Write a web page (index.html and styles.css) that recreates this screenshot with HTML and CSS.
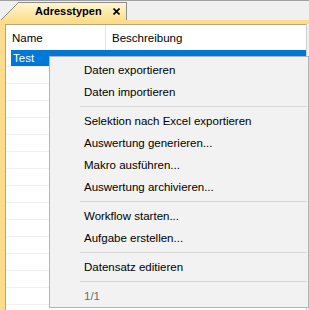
FILE: index.html
```html
<!DOCTYPE html>
<html>
<head>
<meta charset="utf-8">
<link rel="stylesheet" href="styles.css">
</head>
<body>
<div class="window">
  <div class="tabstrip">
    <div class="tab">
      <span class="tab-title">Adresstypen</span>
      <svg class="tab-close" width="7" height="7" viewBox="0 0 7 7"><path d="M0.5 0.5 L6.5 6.5 M6.5 0.5 L0.5 6.5" stroke="#000" stroke-width="1.6" fill="none"/></svg>
    </div>
  </div>
  <div class="frame">
    <div class="pane">
      <div class="grid-head">
        <div class="hcell c1">Name</div>
        <div class="hcell c2">Beschreibung</div>
      </div>
      <div class="row selected"><div class="sel">Test</div></div>
      <div class="row"></div><div class="row"></div><div class="row"></div><div class="row"></div>
      <div class="row"></div><div class="row"></div><div class="row"></div><div class="row"></div>
      <div class="row"></div><div class="row"></div><div class="row"></div><div class="row"></div>
      <div class="row"></div><div class="row"></div><div class="row"></div>
    </div>
  </div>
  <div class="menu">
    <div class="item">Daten exportieren</div>
    <div class="item">Daten importieren</div>
    <div class="sep"></div>
    <div class="item">Selektion nach Excel exportieren</div>
    <div class="item">Auswertung generieren...</div>
    <div class="item">Makro ausführen...</div>
    <div class="item">Auswertung archivieren...</div>
    <div class="sep"></div>
    <div class="item">Workflow starten...</div>
    <div class="item">Aufgabe erstellen...</div>
    <div class="sep"></div>
    <div class="item">Datensatz editieren</div>
    <div class="sep"></div>
    <div class="item disabled">1/1</div>
  </div>
</div>
</body>
</html>
```
FILE: styles.css
```css
* { box-sizing: border-box; }
html, body { margin: 0; padding: 0; }
body {
  background: #f0f0f0;
  font-family: "Liberation Sans", Arial, sans-serif;
  font-size: 11.5px;
  color: #000;
  width: 309px;
  height: 310px;
  overflow: hidden;
}
.window {
  position: relative;
  height: 310px;
  border-top: 1px solid #a0a0a0;
}
.tabstrip {
  height: 19px;
  padding-top: 1px;
  padding-left: 1px;
  display: flex;
}
.tab {
  width: 126px;
  height: 18px;
  display: flex;
  align-items: center;
  padding-left: 34px;
  border-right: 1px solid #8c8c8c;
  background:
    linear-gradient(to bottom right, #f0f0f0 calc(50% - 0.7px), #8a8a8a 50%, transparent calc(50% + 0.7px)) 0 0 / 18px 18px no-repeat,
    linear-gradient(#8c8c8c, #8c8c8c) 17px 0 / 100% 1px no-repeat,
    linear-gradient(#fff7d6, #fde08c);
}
.tab-title {
  font-weight: bold;
  font-size: 11px;
}
.tab-close {
  margin-left: auto;
  margin-right: 6px;
  display: block;
}
.frame {
  border-top: 4px solid #fddc8b;
  height: 290px;
}
.pane {
  width: 307px;
  height: 100%;
  background: #fff;
  border-left: 5px solid #fddc8b;
  border-right: 1px solid #cfcfcf;
  box-shadow: inset 1px 1px 0 #b7a57c;
  padding: 1px 0 0 1px;
}
.grid-head {
  display: flex;
  height: 25px;
}
.hcell {
  display: flex;
  align-items: center;
  padding-left: 6px;
}
.hcell.c1 {
  width: 100px;
  border-right: 1px solid #e5e5e5;
}
.hcell.c2 { flex: 1; }
.row {
  height: 17px;
  border-bottom: 1px solid #f0f0f0;
}
.row.selected { padding-left: 5px; }
.sel {
  height: 16px;
  background: #0078d7;
  color: #fff;
  padding-left: 2px;
  line-height: 16px;
}
.menu {
  position: absolute;
  left: 49px;
  top: 55px;
  width: 260px;
  background: #f2f2f2;
  border: 1px solid #b4b4b4;
  padding: 2px 0 0 0;
}
.item {
  height: 22px;
  line-height: 22px;
  padding-left: 34px;
  white-space: nowrap;
}
.item.disabled { color: #6d6d6d; }
.sep {
  height: 1px;
  margin: 3px 1px 3px 30px;
  background: #d7d7d7;
}
```
